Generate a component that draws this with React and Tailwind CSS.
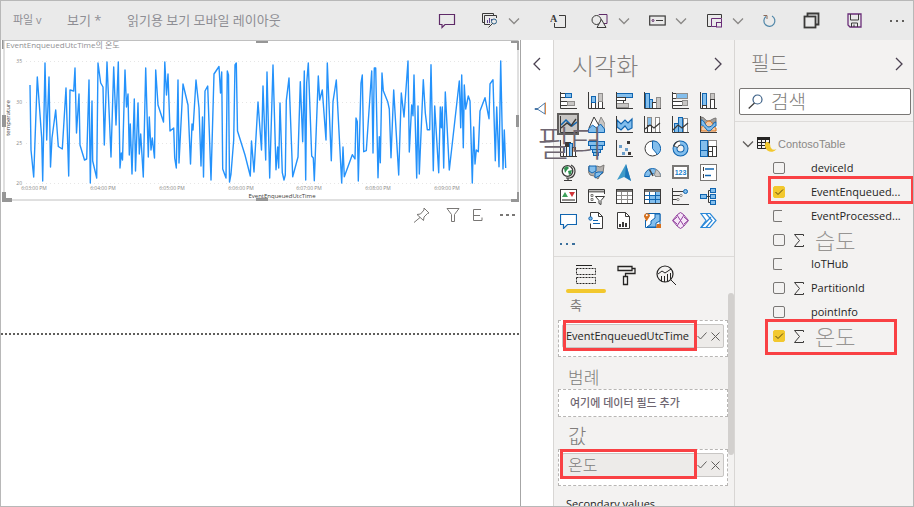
import React from "react";

const INK = "#3b3a39";
const GRAY = "#8f8d8b";
const BLUE = "#1065b0";
const SKY = "#83beec";

const SERIES =
  "30,85 31,150 33.7,177 37.3,77 41.7,138 42.7,181 45,63 46.7,140 49,77 50.5,167 52,138 55.7,110 58.3,146.5 62.3,149 66,88 68.7,176 70,90 73.7,91 75,68 76.5,133 79,94 80,145 84.5,160 86.7,159 89,80 90.3,183 92,101 92.7,161 96.7,178 98,63 100.7,83 103,87 104.3,145 107,62 111,157 113.7,67 116,125 118.3,62 120,168 121.3,153 122.5,160 125,70 126.5,107 128,94 129.3,155 130.3,124 132,174 134.3,99 135.5,171 138,103 139.3,154 140.7,134 143.3,177 145.7,68 148.3,157 149.3,117 151,150 152.3,138 154.5,158 155.7,70 158,105 163.5,122 164.8,62 166.5,95 168,74 170,131 173.7,128 174.7,158 176.3,168 178,80 179,163 183,84 188,105 190.5,164 192,124 193,130 196,80 199,108 201,166 202.5,117 203.5,177 205,91 207.7,86 211,180 214,74 219,66.5 220.5,93 221.7,72 222.7,169 226,178 227.3,71 228.5,75 229.5,182 231,174 233.7,140 235,65 236.3,63 237.5,131 245,155 250.3,176 251.5,141 254,172 258,102 261.5,150 263,86 265.7,160 267,72 269.7,178 273,65 276,169.7 277.7,147 278.7,168 280,103 282.3,172.7 284,180 285.3,175 286.3,100.7 289,78 292.7,176.7 298,157 300.3,81.7 302.7,141.7 304.3,71 305.7,180 306.7,83 308.3,63 311.7,156 313.3,158 314.3,180.7 318.3,76 319.7,100 322.3,90 326,140 327.3,63 331.3,160.7 333,101.7 336.3,80 341.7,183 343,147 344.3,176.7 352.3,154.7 355,159 356,118 357.3,121.7 358.3,181 361,83 362.3,75 363.7,151.7 366.3,150.7 371.7,71 373,153 374.3,68 375.7,68 378,177.7 379.3,136.7 380.3,162.7 382,73 383.3,90.7 387.7,101.7 389.3,109 391,157.7 393.7,90 398.7,175 401.3,93 404,117 408,61 409.3,152 411.7,105 413,115.7 414,75 416.7,178 418,106 419.3,174 423.3,79.7 425.3,113 427.3,129.7 429.7,129.7 431,64.7 433.3,170.7 434.7,106 438.7,172.7 440.3,107 441.3,127.7 442.3,107 443.7,168 445.3,92 449.3,170 459.3,81 460.7,127.7 461.7,75 463.3,147.7 464.3,85 465.7,109 468.3,96 470,101 472.3,183 473.7,127 475,164 476.3,150 478.3,151.7 480,111 485,97.7 489,118.7 490,84 493,79.7 495.3,160.7 496.7,107 499,166.7 500.7,61 503,169 504.3,130 505.7,168";

const TICKS_Y = [
  ["35", 61],
  ["30", 102],
  ["25", 143],
  ["20", 183],
];
const TICKS_X = [
  ["6:03:00 PM", 34],
  ["6:04:00 PM", 103],
  ["6:05:00 PM", 172],
  ["6:06:00 PM", 241],
  ["6:07:00 PM", 309],
  ["6:08:00 PM", 378],
  ["6:09:00 PM", 447],
];

function Svg({ w = 17, h = 17, children, className }) {
  return (
    <svg width={w} height={h} viewBox={`0 0 ${w} ${h}`} fill="none" className={className} aria-hidden="true">
      {children}
    </svg>
  );
}

function Chevron({ dir, className }) {
  const d = { left: "M9 1 3 7l6 6", right: "M3 1l6 6-6 6" }[dir];
  return (
    <Svg w={12} h={14} className={className}>
      <path d={d} stroke="#4a4050" strokeWidth="1.3" />
    </Svg>
  );
}

function ChevronDown({ color = "#8a8886" }) {
  return (
    <Svg w={12} h={8}>
      <path d="M1 1.5l5 5 5-5" stroke={color} strokeWidth="1.3" />
    </Svg>
  );
}

const Axes = () => <path d="M.5 0v16.5H17" stroke={INK} />;
const R = ({ x, y, w, h, f = "#fff", s = INK }) => (
  <rect x={x + 0.5} y={y + 0.5} width={w - 1} height={h - 1} fill={f} stroke={s} />
);

const VISUALS = [
  ["Stacked bar chart", <><R x={0} y={1} w={6} h={5} /><R x={5} y={1} w={7} h={5} f={SKY} s={BLUE} /><R x={0} y={9} w={8} h={5} /><R x={7} y={9} w={8} h={5} f="#c8c6c4" s={GRAY} /><Axes /></>],
  ["Stacked column chart", <><R x={3} y={9} w={5} h={8} /><R x={3} y={4} w={5} h={7} f={SKY} s={BLUE} /><R x={10} y={8} w={5} h={9} /><R x={10} y={1} w={5} h={9} f="#c8c6c4" s={GRAY} /><Axes /></>],
  ["Clustered bar chart", <><R x={0} y={1} w={17} h={5} f={SKY} s={BLUE} /><R x={0} y={5} w={10} h={4} /><R x={0} y={8} w={8} h={4} /><R x={0} y={11} w={13} h={5} f="#c8c6c4" s={GRAY} /><Axes /></>],
  ["Clustered column chart", <><R x={1} y={1} w={5} h={16} f={SKY} s={BLUE} /><R x={5} y={7} w={4} h={10} f={SKY} s={BLUE} /><R x={8} y={10} w={5} h={7} /><R x={12} y={5} w={5} h={12} f="#c8c6c4" s={GRAY} /><Axes /></>],
  ["100% stacked bar chart", <><R x={0} y={1} w={5} h={6} /><R x={4} y={1} w={12} h={6} f={SKY} s={GRAY} /><R x={0} y={9} w={11} h={5} /><R x={10} y={8} w={6} h={6} f="#c8c6c4" s={GRAY} /><Axes /></>],
  ["100% stacked column chart", <><R x={2} y={1} w={5} h={13} f={SKY} s={BLUE} /><R x={2} y={13} w={5} h={4} /><R x={10} y={1} w={5} h={7} f="#c8c6c4" s={GRAY} /><R x={10} y={7} w={5} h={10} /><Axes /></>],

  ["Line chart", <><path d="M1 9l5-5 6 6 5-4" stroke={BLUE} strokeWidth="1.5" /><path d="M1 12l6-5 4 3 5-7" stroke={INK} strokeWidth="1.4" /><Axes /></>],
  ["Area chart", <><path d="M8 14l5-13 4 7v8z" fill="#c8c6c4" stroke={GRAY} /><path d="M1 12l5-11 7 12z" fill="#fff" stroke={INK} /><path d="M.5 16.500V13l4-4 4 3 4-4 4 5v3.500z" fill={SKY} stroke={BLUE} /></>],
  ["Stacked area chart", <><path d="M1 4l4 4 4-4 3 3 4-4v9l-4 2-3-4-4 4-4-3z" fill={SKY} stroke={BLUE} strokeWidth="1.2" /><Axes /></>],
  ["Line and stacked column chart", <><R x={3} y={1} w={5} h={9} f={SKY} s={GRAY} /><R x={3} y={9} w={5} h={8} /><R x={11} y={1} w={5} h={16} f="#fff" s={GRAY} /><path d="M1 13l5-4 4 3 6-5" stroke={INK} strokeWidth="1.2" /><Axes /></>],
  ["Line and clustered column chart", <><R x={2} y={7} w={5} h={10} f={SKY} s={BLUE} /><R x={6} y={1} w={5} h={16} f={SKY} s={BLUE} /><R x={11} y={2} w={5} h={15} f="#fff" s={GRAY} /><path d="M1 14l5-5 4 3 6-5" stroke={INK} strokeWidth="1.2" /><Axes /></>],
  ["Ribbon chart", <><path d="M1 1c4 0 4 4 7 4s5-3 8-3v4c-4 0-5 4-8 4S5 6 1 6z" fill="#a19f9d" stroke="#797775" /><path d="M1 11c4 0 4-6 8-6s4 7 7 7v3H1z" fill="#f3c9a4" stroke="#d6701c" /><path d="M1 4c4 0 4 7 8 7s4-5 7-5v4c-3 0-4 5-7 5s-4-6-8-6z" fill={SKY} stroke={BLUE} /><Axes /></>],

  ["Waterfall chart", <><R x={3} y={6} w={4} h={11} /><R x={5} y={2} w={6} h={5} f={INK} /><R x={9} y={3} w={4} h={14} f={SKY} s={BLUE} /><R x={12} y={7} w={4} h={10} /><Axes /></>],
  ["Funnel", <><R x={0} y={1} w={17} h={5} f={SKY} s={BLUE} /><R x={2} y={5} w={13} h={5} f={SKY} s={BLUE} /><R x={4} y={9} w={9} h={4} f={SKY} s={BLUE} /><R x={5} y={12} w={6} h={4} f={SKY} s={BLUE} /></>],
  ["Scatter chart", <><path d="M3 5h3v3H3zM9 8h3v3H9zM6 12h3v3H6z" fill={BLUE} opacity=".6" /><path d="M11 1h3v3h-3zM12 12h3v3h-3z" fill={INK} /><Axes /></>],
  ["Pie chart", <><circle cx="8.500" cy="8.500" r="7.500" fill="#fff" stroke={INK} /><path d="M8.500 1v7.500l5 6A7.500 7.500 0 0 0 8.500 1z" fill={SKY} stroke={BLUE} /></>],
  ["Donut chart", <><circle cx="8.500" cy="8.500" r="5.500" stroke={BLUE} strokeWidth="5" /><circle cx="8.500" cy="8.500" r="5.500" stroke={SKY} strokeWidth="3" /><path d="M3.500 7A5.500 5.500 0 0 1 8 3" stroke={INK} strokeWidth="5" /><path d="M4 6.500A5.500 5.500 0 0 1 8 3" stroke="#fff" strokeWidth="3" /></>],
  ["Treemap", <><R x={0} y={0} w={8} h={17} f={SKY} s={BLUE} /><R x={8} y={0} w={9} h={7} f="#fff" s={GRAY} /><R x={8} y={6} w={5} h={6} f="#fff" /><R x={12} y={6} w={5} h={11} /><R x={8} y={11} w={5} h={6} /><path d="M0 10.500h8M7.500 0v17" stroke={BLUE} /></>],

  ["Map", <><circle cx="7.500" cy="7" r="5.300" fill="#fff" stroke={INK} strokeWidth="1.300" /><path d="M4 4l3-2 2 2-2 2-2 3zM8 7l4-1-1 4-2 1z" fill="#2f8f4e" /><path d="M11 1a7 7 0 0 1-1 13H6M8 14v2M4 16.500h8" stroke={INK} strokeWidth="1.200" /></>],
  ["Filled map", <><path d="M1 2l4 1 4-1 3 1 4-2-1 8-3 2-2 4-4-3-4-1-2-4z" fill="#b3b0ad" stroke="#797775" /><path d="M1 2h7v5l-4 2-3-2zM10 8h5l-4 4-4 2V9z" fill={SKY} stroke={BLUE} /></>],
  ["Azure map", <><path d="M10 0l5 17-7-4-7 3z" fill="#3f9bc9" /><path d="M10 0l5 17-6-4z" fill="#1b75b8" /></>],
  ["Gauge", <><path d="M.5 12.500a8 8 0 0 1 16 0h-5a3 3 0 0 0-6 0z" fill={SKY} stroke={BLUE} /><path d="M12 5.500a8 8 0 0 1 4.500 7h-5l-1-2z" fill="#c8c6c4" stroke={GRAY} /><path d="M5.500 5.500l3.500 6.500" stroke={INK} strokeWidth="1.500" /></>],
  ["Card", <><rect x="1" y="2" width="15" height="12" fill="#fff" stroke="#797775" strokeWidth="2" /><text x="8.500" y="11" textAnchor="middle" fontSize="7" fontFamily="Liberation Sans, sans-serif" fontWeight="700" fill="#1880cc">123</text></>],
  ["Multi-row card", <><rect x=".5" y=".5" width="16" height="16" fill="#fff" stroke="#797775" /><path d="M3.500 3v4M3.500 10v4" stroke={INK} /><path d="M5 5h9M5 11.500h6" stroke={BLUE} strokeWidth="1.500" /></>],

  ["KPI", <><rect x=".5" y="1.500" width="16" height="13" fill="#fff" stroke={INK} /><path d="M2 9l3-5 3 5z" fill="#3ca15b" /><path d="M9 4h6l-3 5z" fill="#d13438" /><path d="M2 12h13" stroke={GRAY} strokeWidth="2" /></>],
  ["Slicer", <><path d="M8 14.500H.500V1.500h16V6" fill="#fff" stroke={INK} /><path d="M1 3.500h15" stroke="#797775" strokeWidth="2" /><path d="M3 6.500h2v2H3zM3 10.500h2v2H3z" stroke="#797775" /><path d="M7.500 8.500h9l-3.500 4v4l-2-1v-3z" fill="#fff" stroke={INK} /></>],
  ["Table", <><rect x=".5" y="1.500" width="16" height="14" fill="#fff" stroke={INK} /><path d="M1 3h15" stroke="#797775" strokeWidth="2" /><path d="M1 7.500h15M1 11.500h15M5.500 4v11M11.500 4v11" stroke={GRAY} /></>],
  ["Matrix", <><rect x=".5" y="1.500" width="16" height="14" fill="#fff" stroke={INK} /><path d="M6 8h10v7H6zM11 4h5v11h-5z" fill={SKY} /><path d="M1 3h15" stroke="#797775" strokeWidth="2" /><path d="M1 7.500h15M1 11.500h15M5.500 4v11M11.500 4v11" stroke={BLUE} /></>],
  ["Key influencers", <><path d="M1 3.500h10M1 7.500h7M1 11.500h4" stroke={INK} /><circle cx="13.500" cy="3.500" r="2" fill={SKY} stroke={BLUE} /><circle cx="9" cy="7.500" r="1.200" stroke={GRAY} /><circle cx="6" cy="11.500" r="1.200" stroke={GRAY} /><Axes /></>],
  ["Decomposition tree", <><path d="M6 8.500h5M8.500 2.500h3M8.500 14.500h3M8.500 2.500v12" stroke={INK} /><R x={0} y={6} w={7} h={5} f={SKY} s={BLUE} /><R x={10} y={0} w={6} h={5} f={SKY} s={BLUE} /><R x={10} y={6} w={6} h={5} f={SKY} s={BLUE} /><R x={10} y={12} w={6} h={5} f={SKY} s={BLUE} /></>],

  ["Q&A", <path d="M.500 2.500h16v10h-9l-4 4v-4h-3z" fill="#fff" stroke={BLUE} strokeWidth="1.200" />],
  ["Smart narrative", <><path d="M2.500 7V.500h8l4 4v12h-12v-5" fill="#fff" stroke={INK} /><path d="M10.500.500v4h4" stroke={INK} /><circle cx="2.500" cy="6.500" r="1.700" fill={SKY} stroke={BLUE} /><path d="M5 8.500h5M5 11.500h7" stroke={BLUE} /></>],
  ["Paginated report", <><path d="M1.500.500h8l4 4v12h-12z" fill="#fff" stroke={INK} /><path d="M9.500.500v4h4" stroke={INK} /><path d="M3 12h2v3H3zM6 10h2v5H6zM9 11h2v4H9z" fill={INK} /></>],
  ["ArcGIS map", <><path d="M2 1.500h14v14H1.500V8" fill="#fff" stroke={BLUE} /><path d="M16 2h-5v4l-4 3v3l-4 3h9v-4l4-2z" fill={SKY} stroke={BLUE} /><path d="M2.500 9.500l-2.500-5A3 3 0 1 1 6 4z" fill="#d6701c" /><circle cx="2.800" cy="3.300" r="1" fill="#fff" /><path d="M13 12h4v4h-5z" fill="#d6701c" /></>],
  ["Power Apps", <><path d="M5.500 2.500l3-2 3 2 5 6-5 6-3 2-3-2-5-6z" fill="#f6e6f8" stroke="#8f3f9b" /><path d="M5 3l7 11M12 3L5 14M5 5L1 8.500 5 12M12 5l4 3.500-4 3.500" stroke="#8f3f9b" /></>],
  ["Power Automate", <><path d="M1 1.500h9l6 7-6 7H1l5-7z" fill="#fff" stroke="#2b88d8" strokeWidth="1.200" /><path d="M6 1.500l6 7-6 7M1 15.500L11 5" stroke="#2b88d8" strokeWidth="1.200" /></>],
];

function Toolbar() {
  const btn = "flex items-center justify-center";
  return (
    <header className="flex h-[39px] shrink-0 items-center bg-[#eaeaea] pl-3 text-[#8e8e94]">
      <nav className="flex min-w-0 flex-1 items-center">
        <button className="w-[54px] text-left text-[11px]">파일 v</button>
        <button className="w-[60px] text-left text-[13px]">보기 *</button>
        <button className="whitespace-nowrap text-left text-[13px]">읽기용 보기 모바일 레이아웃</button>
      </nav>
      <div className="flex shrink-0 items-center">
        <button aria-label="Comment" className={`${btn} w-9`}>
          <Svg w={18} h={16}><path d="M1.500 1.500h15v10H7l-3 3v-3H1.500z" stroke="#5f2a68" strokeWidth="1.200" /></Svg>
        </button>
        <button aria-label="Explore" className={`${btn} ml-4 w-[18px]`}>
          <Svg w={18} h={17}><path d="M3 10.500H1.500v-9h11V3M9 12.500H3.500v-9h12V6" stroke={INK} /><path d="M6.500 8v3M8.500 6v5M10.500 7v2" stroke="#5b3f8c" /><circle cx="13" cy="9.500" r="2.500" stroke="#2a5f86" /><path d="M11.500 11.500L7.500 15.500" stroke={INK} /></Svg>
        </button>
        <button aria-label="Explore options" className={`${btn} ml-[9px] w-3`}><ChevronDown /></button>
        <button aria-label="Text box" className={`${btn} ml-5 w-9`}>
          <Svg w={17} h={16}><path d="M9 2.500h6.500v12H4.500V10" stroke={INK} /><text x="0" y="9" fontSize="10" fontFamily="Liberation Serif, serif" fontWeight="700" fill={INK}>A</text></Svg>
        </button>
        <button aria-label="Shapes" className={`${btn} ml-[6px] w-9`}>
          <Svg w={18} h={16}><circle cx="5.500" cy="7" r="4.500" stroke={INK} /><path d="M8 2V1.500h8v9h-3" stroke="#5f2a68" /><path d="M10.500 6.500l4.500 8H6z" fill="#eaeaea" stroke={INK} /></Svg>
        </button>
        <button aria-label="Shape options" className={`${btn} w-3`}><ChevronDown /></button>
        <button aria-label="Buttons" className={`${btn} ml-[9px] w-9`}>
          <Svg w={17} h={11}><rect x=".7" y="1" width="15.500" height="9" stroke={INK} strokeWidth="1.200" /><circle cx="4" cy="5.500" r="1" stroke="#5f2a68" /><path d="M7 5.500h7" stroke={INK} /></Svg>
        </button>
        <button aria-label="Button options" className={`${btn} w-3`}><ChevronDown /></button>
        <button aria-label="Visual interactions" className={`${btn} ml-[9px] w-9`}>
          <Svg w={17} h={15}><path d="M15.500 5V1.500H1.500v12h4" stroke={INK} /><path d="M10 13.500H5.500v-8h10V9" stroke="#6a2d78" /><rect x="10.500" y="9.500" width="5" height="4.500" stroke="#6a2d78" /></Svg>
        </button>
        <button aria-label="Interaction options" className={`${btn} w-3`}><ChevronDown /></button>
        <button aria-label="Refresh" className={`${btn} ml-[7px] w-9`}>
          <Svg w={14} h={15}><path d="M4 3.500a5.500 5.500 0 1 0 6-.5" stroke="#4f86a8" strokeWidth="1.200" /><path d="M1.500 2.500h3.500v3.500" stroke="#8a6a5a" /></Svg>
        </button>
        <button aria-label="Duplicate page" className={`${btn} ml-[6px] w-9`}>
          <Svg w={17} h={17}><path d="M4.500 4V1.500h11v11H13" stroke={INK} strokeWidth="1.800" /><rect x="1.500" y="4.500" width="11" height="11" stroke={INK} strokeWidth="1.800" /></Svg>
        </button>
        <button aria-label="Save" className={`${btn} ml-[7px] w-9`}>
          <Svg w={15} h={15}><path d="M1 1h13v13H3l-2-2z" stroke="#6a2d78" strokeWidth="1.300" /><path d="M3.500 1v6h8V1M4.500 14v-4h6v4M7 11.500V14" stroke={INK} /></Svg>
        </button>
        <button aria-label="More options" className={`${btn} ml-[9px] w-8`}>
          <Svg w={16} h={4}><path d="M1 1h2v2H1zM7 1h2v2H7zM13 1h2v2h-2z" fill="#605e5c" /></Svg>
        </button>
      </div>
    </header>
  );
}

function LineChart() {
  return (
    <svg viewBox="1 40 519 162" className="block h-auto w-full" role="img" aria-label="온도">
      <rect x="4" y="40.500" width="514" height="159.500" fill="#fff" stroke="#c0c0c0" />
      {TICKS_Y.map(([label, y]) => (
        <g key={label}>
          <path d={`M26 ${y + 0.5}H510`} stroke="#e6e6e6" strokeDasharray="1 3" />
          <text x="22" y={y + 2} textAnchor="end" fontSize="5" fill="#8a8886">{label}</text>
        </g>
      ))}
      <polyline points={SERIES} fill="none" stroke="#2492fb" strokeWidth="1.400" strokeLinejoin="round" />
      {TICKS_X.map(([label, x]) => (
        <text key={label} x={x} y="190" textAnchor="middle" fontSize="5" fill="#8a8886">{label}</text>
      ))}
      <text x="282" y="198" textAnchor="middle" fontSize="6" fill="#3b3a39">EventEnqueuedUtcTime</text>
      <text transform="translate(10 118) rotate(-90)" textAnchor="middle" fontSize="6" fill="#3b3a39">temperature</text>
      <rect x="5" y="41" width="117" height="9" fill="#fff" />
      <text x="6" y="48" fontSize="8" fill="#8f8f93">EventEnqueuedUtcTime의 온도</text>
      <g fill="#969696">
        <path d="M2 40h1.500v9H2zM256 41h12v2h-12zM256 198h12v3h-12zM2 115h4v12H2zM516 115h3v12h-3z" />
        <path d="M511 41h8v9h-2v-7h-6zM519 192v10h-8v-3h6v-7zM2 192h4v6h6v4H2z" />
      </g>
    </svg>
  );
}

function Canvas() {
  return (
    <main className="min-w-0 flex-1 border-r border-[#a6a6a6] bg-white">
      <LineChart />
      <div className="flex h-[26px] items-center justify-end gap-3 pr-1 text-[#797775]">
        <button aria-label="Pin visual">
          <Svg w={17} h={16}><path d="M11 1l5 5-1.500.5-3.500 3.500-.5 3.500L4 7.500 7.500 7 11 3zM7 10.500L1 15.500" stroke="currentColor" /></Svg>
        </button>
        <button aria-label="Filters" className="ml-1">
          <Svg w={14} h={16}><path d="M1 1.500h12L8.500 7.500v7h-3v-7z" stroke="currentColor" /></Svg>
        </button>
        <button aria-label="Focus mode">
          <Svg w={11} h={14}><path d="M9 1.500H1.500v11H10M2 7.500h6M10 9.500v3" stroke="currentColor" /></Svg>
        </button>
        <button aria-label="More options" className="ml-1">
          <Svg w={17} h={4}><path d="M1 1h3v2H1zM7 1h3v2H7zM13 1h3v2h-3z" fill="currentColor" /></Svg>
        </button>
      </div>
      <div className="mt-[105px] mr-px border-t-2 border-dotted border-[#605e5c]" />
    </main>
  );
}

function FiltersPane() {
  return (
    <aside className="relative flex w-8 shrink-0 flex-col items-center bg-white pt-[17px]">
      <button aria-label="Expand filters"><Chevron dir="left" /></button>
      <Svg w={14} h={14} className="mt-[30px] ml-2">
        <path d="M1 7.500h3L11 2v11L4 8.500H1z" fill="#fff" stroke="#4a78a8" />
        <path d="M11.500 1.500v12" stroke="#d98a4a" />
      </Svg>
      <span className="absolute left-4 top-[84px] z-10 whitespace-nowrap text-[36px] leading-10 font-light text-[#6e6570]">필터</span>
    </aside>
  );
}

function Well({ title, titleClass, children, className }) {
  return (
    <section className={className}>
      <h3 className={titleClass}>{title}</h3>
      <div className="border border-dashed border-[#b8b6b4] bg-white p-[3px]">{children}</div>
    </section>
  );
}

function Pill({ label, labelClass, frameClass }) {
  return (
    <div className="relative mb-[5px] flex h-6 items-center rounded-[2px] border border-[#c8c6c4] bg-[#edebe9]">
      <span className={`min-w-0 flex-1 whitespace-nowrap ${labelClass}`}>{label}</span>
      <button aria-label="Field options" className="mr-1">
        <Svg w={10} h={8}><path d="M.5 4l3 3L9.500.500" stroke="#605e5c" /></Svg>
      </button>
      <button aria-label="Remove field" className="mr-[3px]">
        <Svg w={9} h={9}><path d="M.500.500l8 8M8.500.500l-8 8" stroke="#605e5c" /></Svg>
      </button>
      <span className={`pointer-events-none absolute right-[26px] border-3 border-[#f94144] ${frameClass}`} />
    </div>
  );
}

function VisualizationsPane() {
  return (
    <aside className="flex w-[181px] shrink-0 flex-col border-l border-[#d8d6d4] bg-[#f3f2f1]">
      <div className="flex h-12 shrink-0 items-center justify-between pr-[10px] pl-[18px] pt-1">
        <h2 className="text-[24px] leading-7 font-light text-[#807d7b]">시각화</h2>
        <button aria-label="Collapse visualizations" className="-mt-1"><Chevron dir="right" /></button>
      </div>
      <div className="grid shrink-0 grid-cols-[repeat(6,28px)] auto-rows-[24px]">
        {VISUALS.map(([name, art]) => (
          <button
            key={name}
            aria-label={name}
            className={
              name === "Line chart"
                ? "m-auto flex h-[22px] w-[22px] items-center justify-center border-2 border-[#605e5c] bg-[#c8c6c4]"
                : "flex items-center justify-center"
            }
          >
            <Svg>{art}</Svg>
          </button>
        ))}
      </div>
      <button aria-label="More visuals" className="flex h-6 shrink-0 items-center px-[6px]">
        <Svg w={16} h={4}><path d="M0 1h2v2H0zM6 1h2v2H6zM12 1h3v2h-3z" fill="#3a6f9c" /></Svg>
      </button>
      <div className="flex h-[37px] shrink-0 border-t border-[#dddbd9] px-3">
        <button aria-label="Fields" className="flex w-10 flex-col items-center justify-between">
          <Svg w={22} h={20} className="mt-2">
            <path d="M1 .500h16" stroke="#252423" />
            <path d="M1.500 3.500h19v6h-19zM1.500 12.500h19v6h-19z" stroke="#252423" strokeDasharray="2 1" />
          </Svg>
          <span className="h-1 w-full rounded-full bg-[#f2c82e]" />
        </button>
        <button aria-label="Format" className="flex w-10 justify-center pt-2">
          <Svg w={19} h={21}>
            <path d="M1 1.500h14v4H1zM15 3.500h3v5H8.500v3M6.500 11.500h4v8h-4z" stroke="#252423" strokeWidth="1.300" />
          </Svg>
        </button>
        <button aria-label="Analytics" className="flex w-10 justify-center pt-2">
          <Svg w={21} h={21}>
            <circle cx="9" cy="9" r="8" stroke="#252423" strokeWidth="1.200" />
            <path d="M2 9l4-3 3 2 6-4M5.500 16v-5M8.500 17v-6M11.500 16V9M14.500 14V8M15 15l5 5" stroke="#252423" />
          </Svg>
        </button>
      </div>
      <div className="flex min-h-0 flex-1">
        <div className="min-w-0 flex-1 overflow-hidden pl-1">
          <Well title="축" titleClass="h-[27px] pt-[3px] pl-3 text-[13px] text-[#807d7b]">
            <Pill
              label="EventEnqueuedUtcTime"
              labelClass="pl-[3px] text-[11px] text-[#252423]"
              frameClass="left-0 -top-[5px] h-[31px]"
            />
          </Well>
          <Well title="범례" className="mt-[7px]" titleClass="h-[25px] pt-[2px] pl-[10px] text-[17px] leading-[23px] font-light text-[#807d7b]">
            <p className="flex h-5 items-center pl-2 text-[11px] font-medium text-[#6e6570]">여기에 데이터 필드 추가</p>
          </Well>
          <Well title="값" className="mt-1" titleClass="h-7 pt-1 pl-[10px] text-[20px] leading-6 font-light text-[#807d7b]">
            <Pill
              label="온도"
              labelClass="pl-[5px] text-[16px] font-light text-[#807d7b]"
              frameClass="-left-[3px] -top-[5px] h-[30px]"
            />
          </Well>
          <h3 className="mt-[10px] pl-2 text-[11px] text-[#252423]">Secondary values</h3>
        </div>
        <div className="h-[162px] w-[6px] shrink-0 rounded-full bg-[#d2d0ce]" />
      </div>
    </aside>
  );
}

const FIELDS = [
  { name: "deviceId" },
  { name: "EventEnqueued...", checked: true, frame: "-right-px left-[33px] -top-1 h-7" },
  { name: "EventProcessed...", open: true },
  { name: "습도", sum: true, korean: true },
  { name: "IoTHub", open: true },
  { name: "PartitionId", sum: true },
  { name: "pointInfo" },
  { name: "온도", sum: true, korean: true, checked: true, frame: "left-[30px] right-4 -top-[5px] h-9" },
];

function FieldRow({ field }) {
  const id = `field-${field.name}`;
  return (
    <li className="relative flex h-6 items-center pl-[38px]">
      <span className="relative flex w-5 items-center">
        <input
          id={id}
          type="checkbox"
          defaultChecked={field.checked}
          className={`h-3 appearance-none border border-[#797775] checked:border-[#f2c82e] checked:bg-[#f2c82e] ${
            field.open ? "w-[9px] rounded-l-[2px] border-r-0" : "w-3 rounded-[2px]"
          }`}
        />
        {field.checked && (
          <Svg w={12} h={12} className="pointer-events-none absolute left-0">
            <path d="M2.500 6l2.500 2.500 5-5" stroke="#5a4a10" />
          </Svg>
        )}
      </span>
      <span className="flex w-[18px] items-center">
        {field.sum && (
          <Svg w={12} h={15}><path d="M10.500 3V1.500H1.500l5 6-5 6h9V12" stroke="#3b3a39" /></Svg>
        )}
      </span>
      <label
        htmlFor={id}
        className={
          field.korean
            ? "pl-1 text-[22px] leading-6 font-light text-[#979593]"
            : "whitespace-nowrap text-[11px] leading-6 text-[#252423]"
        }
      >
        {field.name}
      </label>
      {field.frame && <span className={`pointer-events-none absolute z-10 border-3 border-[#f94144] ${field.frame}`} />}
    </li>
  );
}

function FieldsPane() {
  return (
    <aside className="flex w-[179px] shrink-0 flex-col border-l border-[#d8d6d4] bg-[#f3f2f1]">
      <div className="flex h-12 shrink-0 items-center justify-between pr-2 pl-4">
        <h2 className="text-[20px] leading-7 font-light text-[#807d7b]">필드</h2>
        <button aria-label="Collapse fields"><Chevron dir="right" /></button>
      </div>
      <div className="border-b border-[#dddbd9] pr-[2px] pb-[6px] pl-1">
        <label className="flex h-[27px] items-center gap-2 rounded-[2px] border border-[#797775] bg-white pl-2">
          <Svg w={15} h={15}>
            <circle cx="9.500" cy="5.500" r="4.500" stroke="#3a5f86" strokeWidth="1.200" />
            <path d="M6.500 9L.700 14.500" stroke={INK} strokeWidth="1.200" />
          </Svg>
          <input
            type="search"
            aria-label="검색"
            placeholder="검색"
            className="min-w-0 flex-1 bg-transparent text-[19px] leading-6 font-light outline-none placeholder:text-[#807d7b]"
          />
        </label>
      </div>
      <button className="mt-[10px] flex h-6 shrink-0 items-center pl-[7px] text-left">
        <ChevronDown color="#605e5c" />
        <Svg w={20} h={20} className="ml-[3px]">
          <path d="M0 3h13v3H0z" fill="#252423" />
          <path d="M.5 3.500v11h12v-11M0 8.500h13M0 11.500h13M4.500 6v9M8.500 6v9" stroke="#252423" />
          <path d="M9 8a6 6 0 1 0 10.500 7c-2 1-4 1-5-.5-1.500-1-1-3-1.500-4.500S11 8 9 8z" fill="#f2c82e" />
        </Svg>
        <span className="pl-px font-['Liberation_Sans',sans-serif] text-[11px] text-[#8a8886]">ContosoTable</span>
      </button>
      <ul>
        {FIELDS.map((f) => (
          <FieldRow key={f.name} field={f} />
        ))}
      </ul>
    </aside>
  );
}

export default function App() {
  return (
    <div className="flex h-screen flex-col overflow-hidden border border-[#b8b8b8] bg-white font-['Open_Sans','Noto_Sans_CJK_KR',sans-serif]">
      <Toolbar />
      <div className="flex min-h-0 flex-1">
        <Canvas />
        <FiltersPane />
        <VisualizationsPane />
        <FieldsPane />
      </div>
    </div>
  );
}
